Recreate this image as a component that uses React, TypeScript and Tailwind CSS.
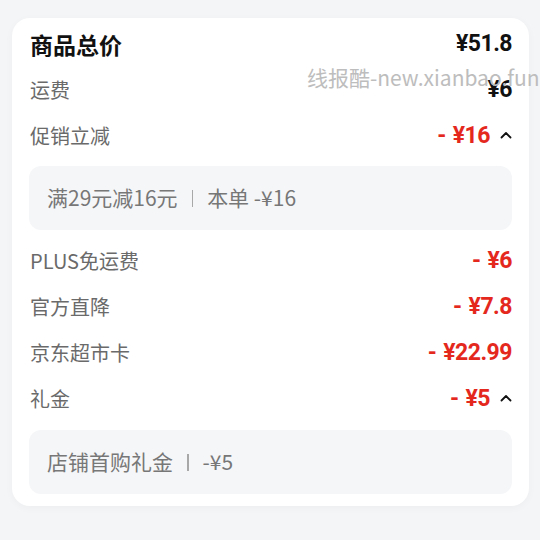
import React from "react";

const NUM = { fontFamily: 'Roboto, "Noto Sans CJK SC", sans-serif' };

const Chevron = () => (
  <svg width="12" height="8" viewBox="0 0 12 8" className="ml-[10px] mb-[3px]">
    <polyline points="1.5,6.5 6,2 10.5,6.5" fill="none" stroke="#111" strokeWidth="1.8" strokeLinecap="round" strokeLinejoin="round" />
  </svg>
);

function Row({ label, value, red, chevron }: { label: string; value: string; red?: boolean; chevron?: boolean }) {
  return (
    <div className="flex h-[46px] items-center justify-between">
      <span className="text-[20px] text-[#6a6a6a]">{label}</span>
      <span className="flex items-center">
        <span style={NUM} className={red ? "text-[23px] font-bold tracking-[-0.5px] text-[#e4281e]" : "text-[23px] font-bold tracking-[-0.5px] text-[#111]"}>
          {red ? <><span className="mr-[7px]">-</span>{value}</> : value}
        </span>
        {chevron && <Chevron />}
      </span>
    </div>
  );
}

export default function App() {
  return (
    <div
      className="relative h-[540px] w-[540px] overflow-hidden bg-[#f4f5f7] pt-[18px]"
      style={{ fontFamily: '"Noto Sans CJK SC", "Noto Sans", sans-serif' }}
    >
      <div className="ml-[12px] w-[517px] rounded-[18px] bg-white pb-[12px] pl-[18px] pr-[17px] pt-[3px] shadow-[0_2px_8px_rgba(0,0,0,0.03)]">
        <div className="flex h-[46px] items-center justify-between">
          <span className="text-[23px] font-bold text-[#111]">商品总价</span>
          <span style={NUM} className="text-[23px] font-bold tracking-[-0.5px] text-[#111]">¥51.8</span>
        </div>
        <Row label="运费" value="¥6" />
        <Row label="促销立减" value="¥16" red chevron />
        <div className="-ml-px mt-[7px] flex h-[64px] items-center rounded-[12px] bg-[#f5f6f8] pl-[18px] text-[21px] text-[#777]">
          满29元减16元<span className="mx-[14px] h-[17px] w-[1.5px] bg-[#a8a8a8]" />本单 -¥16
        </div>
        <div className="mt-[8px]">
          <Row label="PLUS免运费" value="¥6" red />
          <Row label="官方直降" value="¥7.8" red />
          <Row label="京东超市卡" value="¥22.99" red />
          <Row label="礼金" value="¥5" red chevron />
        </div>
        <div className="-ml-px mt-[8px] flex h-[64px] items-center rounded-[12px] bg-[#f5f6f8] pl-[18px] text-[21px] text-[#777]">
          店铺首购礼金<span className="mx-[14px] h-[17px] w-[1.5px] bg-[#a8a8a8]" />-¥5
        </div>
      </div>
      <div className="absolute left-[307px] top-[62px] whitespace-nowrap text-[21px] text-[#bdbdbd]">
        线报酷-new.xianbao.fun
      </div>
    </div>
  );
}
